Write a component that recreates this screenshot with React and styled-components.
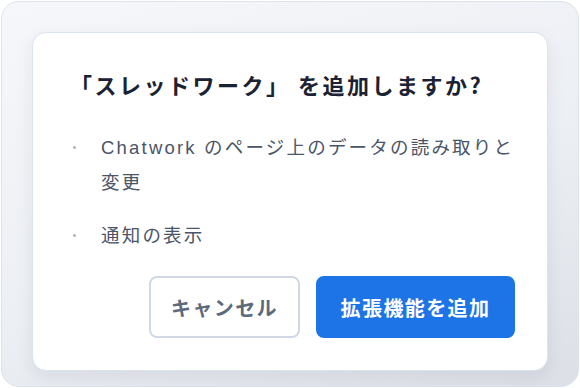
import React from "react";
import styled, { createGlobalStyle } from "styled-components";

const GlobalStyle = createGlobalStyle`
  html, body {
    margin: 0;
    padding: 0;
    background: #ffffff;
  }
  body {
    font-family: "Liberation Sans", "Noto Sans CJK JP", sans-serif;
  }
`;

const permissions = ["Chatwork のページ上のデータの読み取りと変更", "通知の表示"];

export default function App() {
  return (
    <>
      <GlobalStyle />
      <Frame>
        <Dialog>
          <Title>「スレッドワーク」 を追加しますか?</Title>
          <List>
            {permissions.map((p) => (
              <Item key={p}>{p}</Item>
            ))}
          </List>
          <Actions>
            <Button width={151}>キャンセル</Button>
            <Button width={199} primary>
              拡張機能を追加
            </Button>
          </Actions>
        </Dialog>
      </Frame>
    </>
  );
}

const Frame = styled.div`
  box-sizing: border-box;
  width: 578px;
  height: 386px;
  margin: 1px;
  padding: 30px 30px 15px 30px;
  border: 1px solid #dde3ec;
  border-radius: 18px;
  background: linear-gradient(160deg, #f6f7fa 0%, #eceff4 55%, #dcdfe5 100%);
`;

const Dialog = styled.div`
  box-sizing: border-box;
  height: 339px;
  padding: 35px 32px 32px 32px;
  background: #ffffff;
  border: 1px solid #dbe3ee;
  border-radius: 14px;
  box-shadow: 0 6px 18px rgba(30, 40, 60, 0.08);
  display: flex;
  flex-direction: column;
`;

const Title = styled.h1`
  margin: 0 0 0 5px;
  font-family: "Noto Sans CJK JP", sans-serif;
  font-size: 22px;
  line-height: 32px;
  font-weight: 700;
  letter-spacing: 2.5px;
  color: #1a2233;
  white-space: nowrap;
`;

const List = styled.ul`
  list-style: none;
  margin: 30px 0 0 0;
  padding: 0 0 0 36px;
  display: flex;
  flex-direction: column;
  gap: 18px;
`;

const Item = styled.li`
  position: relative;
  font-size: 18.5px;
  line-height: 35px;
  letter-spacing: 2.2px;
  color: #4a5568;

  &::before {
    content: "";
    position: absolute;
    left: -28px;
    top: 16px;
    width: 3px;
    height: 3px;
    border-radius: 50%;
    background: #a9b3c2;
  }
`;

const Actions = styled.div`
  margin-top: auto;
  display: flex;
  justify-content: flex-end;
  gap: 16px;
`;

const Button = styled.button`
  box-sizing: border-box;
  width: ${(p) => p.width}px;
  height: 62px;
  padding: 0;
  border-radius: 8px;
  font-family: "Noto Sans CJK JP", sans-serif;
  font-size: 20px;
  font-weight: 700;
  letter-spacing: 1.4px;
  border: 2px solid ${(p) => (p.primary ? "#1d74e7" : "#cfd8e4")};
  background: ${(p) => (p.primary ? "#1d74e7" : "#ffffff")};
  color: ${(p) => (p.primary ? "#ffffff" : "#5d6a7c")};
`;
